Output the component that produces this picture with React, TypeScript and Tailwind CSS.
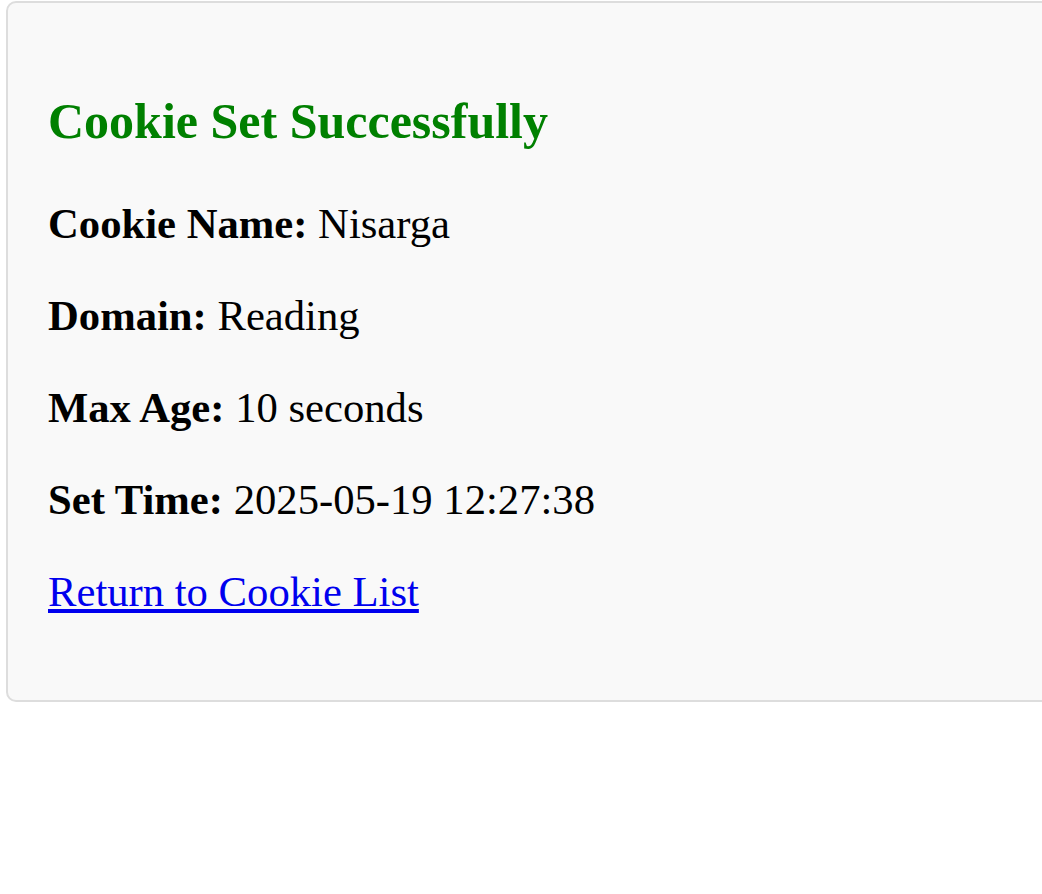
const DETAILS = [
  { label: "Cookie Name:", value: "Nisarga" },
  { label: "Domain:", value: "Reading" },
  { label: "Max Age:", value: "10 seconds" },
  { label: "Set Time:", value: "2025-05-19 12:27:38" },
];

function App() {
  return (
    <div
      className="h-screen w-screen overflow-hidden bg-white text-black"
      style={{ fontFamily: '"Liberation Serif", "Times New Roman", serif' }}
    >
      <div className="ml-[6px] mt-[1px] w-[1100px] rounded-[10px] border-2 border-[#dddddd] bg-[#f9f9f9] px-[40px] pt-[40px] pb-[40px]">
        {/* Heading */}
        <h3 className="mt-[50px] text-[50px] leading-[57px] font-bold text-[#008000]">
          Cookie Set Successfully
        </h3>

        {/* Cookie details */}
        <div className="mt-[49px] mb-[44px] flex flex-col gap-[43px] text-[42.67px] leading-[49px]">
          {DETAILS.map((d) => (
            <p key={d.label}>
              <strong className="font-bold">{d.label}</strong> {d.value}
            </p>
          ))}
          <p>
            <a href="#" className="text-[#0000ee] underline">
              Return to Cookie List
            </a>
          </p>
        </div>
      </div>
    </div>
  );
}

export default App;
